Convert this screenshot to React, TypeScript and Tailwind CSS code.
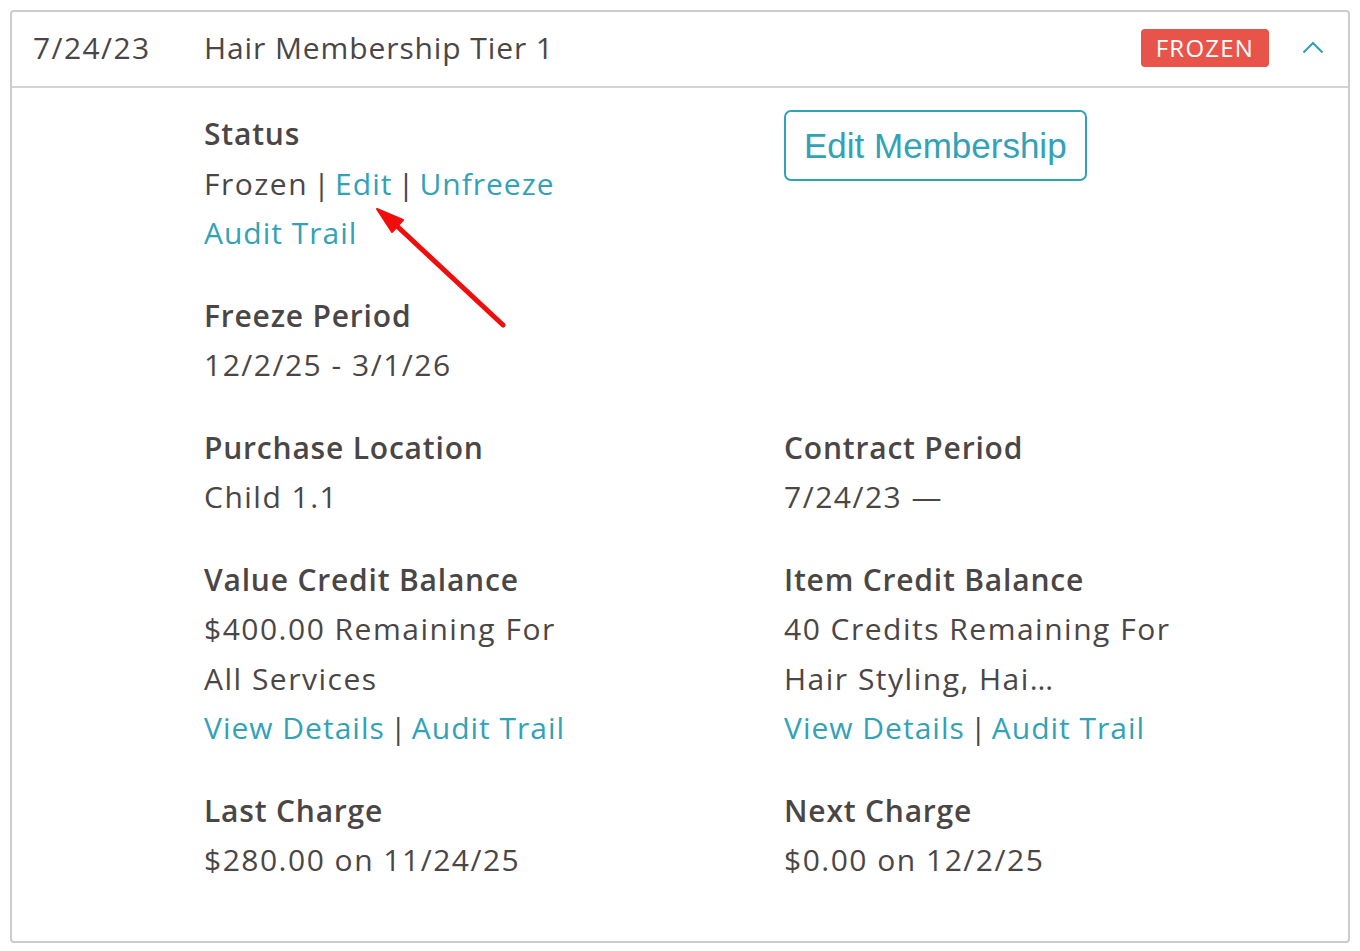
const font = { fontFamily: '"Open Sans", Lato, sans-serif' };

function Sep() {
  return <span className="inline-block w-[27px] text-center tracking-normal text-[#4b4646]">|</span>;
}

function Link({ children }: { children: React.ReactNode }) {
  return <a className="cursor-pointer tracking-[1px] text-[#32a2b6]">{children}</a>;
}

function Field({ label, children }: { label: string; children: React.ReactNode }) {
  return (
    <div>
      <div className="font-semibold tracking-[0.8px]">{label}</div>
      {children}
    </div>
  );
}

export default function App() {
  return (
    <div className="min-h-screen bg-white p-[10px]" style={font}>
      <div className="relative rounded-[4px] border-2 border-[#cccccc] text-[#4b4646]">
        <div className="flex h-[76px] items-center border-b-2 border-[#d4d4d4] pb-[4px] pl-[21px] pr-[24px]">
          <span className="w-[171px] text-[30px] tracking-[1.4px]">7/24/23</span>
          <span className="flex-1 text-[30px] tracking-[0.9px]">Hair Membership Tier 1</span>
          <span className="mt-[2px] flex h-[38px] items-center rounded-[4px] bg-[#e8534a] px-[15px] text-[24px] tracking-[1.2px] text-white">FROZEN</span>
          <svg className="ml-[33px]" width="22" height="14" viewBox="0 0 22 14">
            <polyline points="1.5,12.5 11,3 20.5,12.5" fill="none" stroke="#32a2b6" strokeWidth="2.2" />
          </svg>
        </div>

        <div className="grid grid-cols-[580px_1fr] gap-y-[33px] pb-[56px] pl-[192px] pt-[21px] text-[30px] leading-[49.5px] tracking-[1.5px]">
          <Field label="Status">
            <div>
              Frozen<Sep />
              <Link>Edit</Link>
              <Sep />
              <Link>Unfreeze</Link>
            </div>
            <div>
              <Link>Audit Trail</Link>
            </div>
          </Field>
          <div className="pt-[1px]">
            <button
              className="h-[71px] rounded-[7px] border-2 border-[#32a2b6] px-[18px] text-[35px] tracking-normal text-[#32a2b6]"
              style={{ fontFamily: '"Liberation Sans", Arial, sans-serif' }}
            >
              Edit Membership
            </button>
          </div>

          <Field label="Freeze Period">
            <div>12/2/25 - 3/1/26</div>
          </Field>
          <div />

          <Field label="Purchase Location">
            <div>Child 1.1</div>
          </Field>
          <Field label="Contract Period">
            <div>7/24/23 —</div>
          </Field>

          <Field label="Value Credit Balance">
            <div>$400.00 Remaining For</div>
            <div>All Services</div>
            <div>
              <Link>View Details</Link>
              <Sep />
              <Link>Audit Trail</Link>
            </div>
          </Field>
          <Field label="Item Credit Balance">
            <div>40 Credits Remaining For</div>
            <div>Hair Styling, Hai…</div>
            <div>
              <Link>View Details</Link>
              <Sep />
              <Link>Audit Trail</Link>
            </div>
          </Field>

          <Field label="Last Charge">
            <div>$280.00 on 11/24/25</div>
          </Field>
          <Field label="Next Charge">
            <div>$0.00 on 12/2/25</div>
          </Field>
        </div>

        <svg className="pointer-events-none absolute left-[348px] top-[180px]" width="160" height="150" viewBox="0 0 160 150">
          <line x1="143" y1="133" x2="38" y2="35" stroke="#f20d0d" strokeWidth="5" strokeLinecap="round" />
          <polygon points="17,17 32,40 43,28" fill="#f20d0d" stroke="#f20d0d" strokeWidth="2" strokeLinejoin="round" />
        </svg>
      </div>
    </div>
  );
}
